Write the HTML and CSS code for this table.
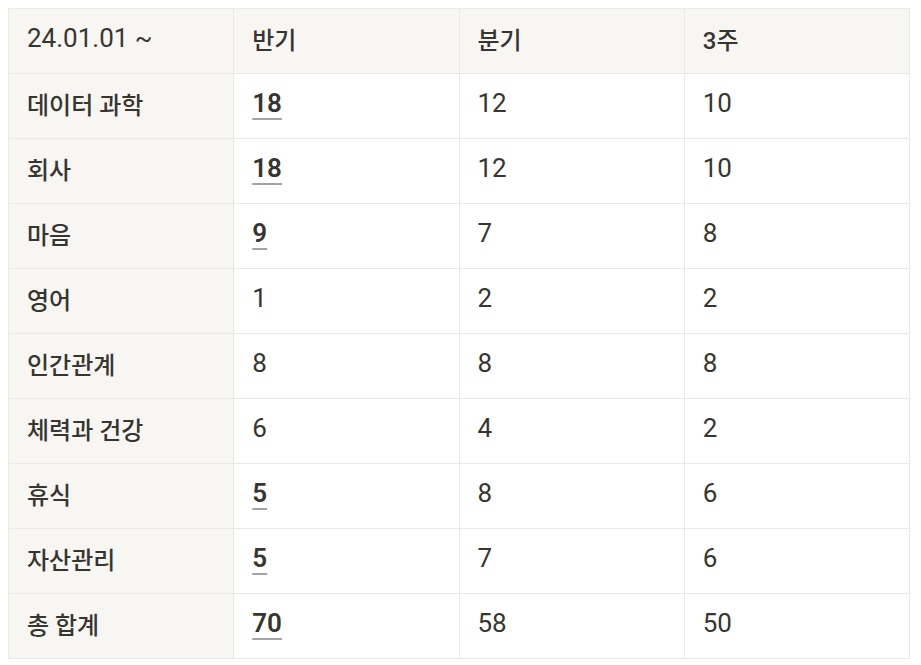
FILE: index.html
```html
<!DOCTYPE html>
<html lang="ko">
<head>
<meta charset="utf-8">
<link rel="stylesheet" href="styles.css">
</head>
<body>
<table class="stats">
  <thead>
    <tr><th class="label">24.01.01 ~</th><th class="ko">반기</th><th class="ko">분기</th><th class="ko">3주</th></tr>
  </thead>
  <tbody>
    <tr><td class="label ko">데이터 과학</td><td><span class="hl">18</span></td><td>12</td><td>10</td></tr>
    <tr><td class="label ko">회사</td><td><span class="hl">18</span></td><td>12</td><td>10</td></tr>
    <tr><td class="label ko">마음</td><td><span class="hl">9</span></td><td>7</td><td>8</td></tr>
    <tr><td class="label ko">영어</td><td>1</td><td>2</td><td>2</td></tr>
    <tr><td class="label ko">인간관계</td><td>8</td><td>8</td><td>8</td></tr>
    <tr><td class="label ko">체력과 건강</td><td>6</td><td>4</td><td>2</td></tr>
    <tr><td class="label ko">휴식</td><td><span class="hl">5</span></td><td>8</td><td>6</td></tr>
    <tr><td class="label ko">자산관리</td><td><span class="hl">5</span></td><td>7</td><td>6</td></tr>
    <tr><td class="label ko">총 합계</td><td><span class="hl">70</span></td><td>58</td><td>50</td></tr>
  </tbody>
</table>
</body>
</html>
```
FILE: styles.css
```css
html, body {
  background: #ffffff;
}
body {
  margin: 8px;
  font-family: Roboto, "Noto Sans CJK KR", sans-serif;
  color: #37352f;
}
.stats {
  border-collapse: collapse;
  width: 902px;
  table-layout: fixed;
  font-size: 26px;
}
.stats th,
.stats td {
  border: 1px solid #e9e9e7;
  height: 65px;
  padding: 0 18px 6px 18px;
  text-align: left;
  vertical-align: middle;
  font-weight: 400;
  box-sizing: border-box;
}
.stats thead th {
  background: #f7f6f3;
  height: 65px;
}
.stats .label {
  background: #f7f6f3;
}
.stats .ko {
  font-size: 24px;
  font-weight: 500;
}
.hl {
  font-weight: 600;
  text-decoration: underline;
  text-decoration-color: rgba(55, 53, 47, 0.45);
  text-decoration-thickness: 2px;
  text-underline-offset: 6px;
}
```
